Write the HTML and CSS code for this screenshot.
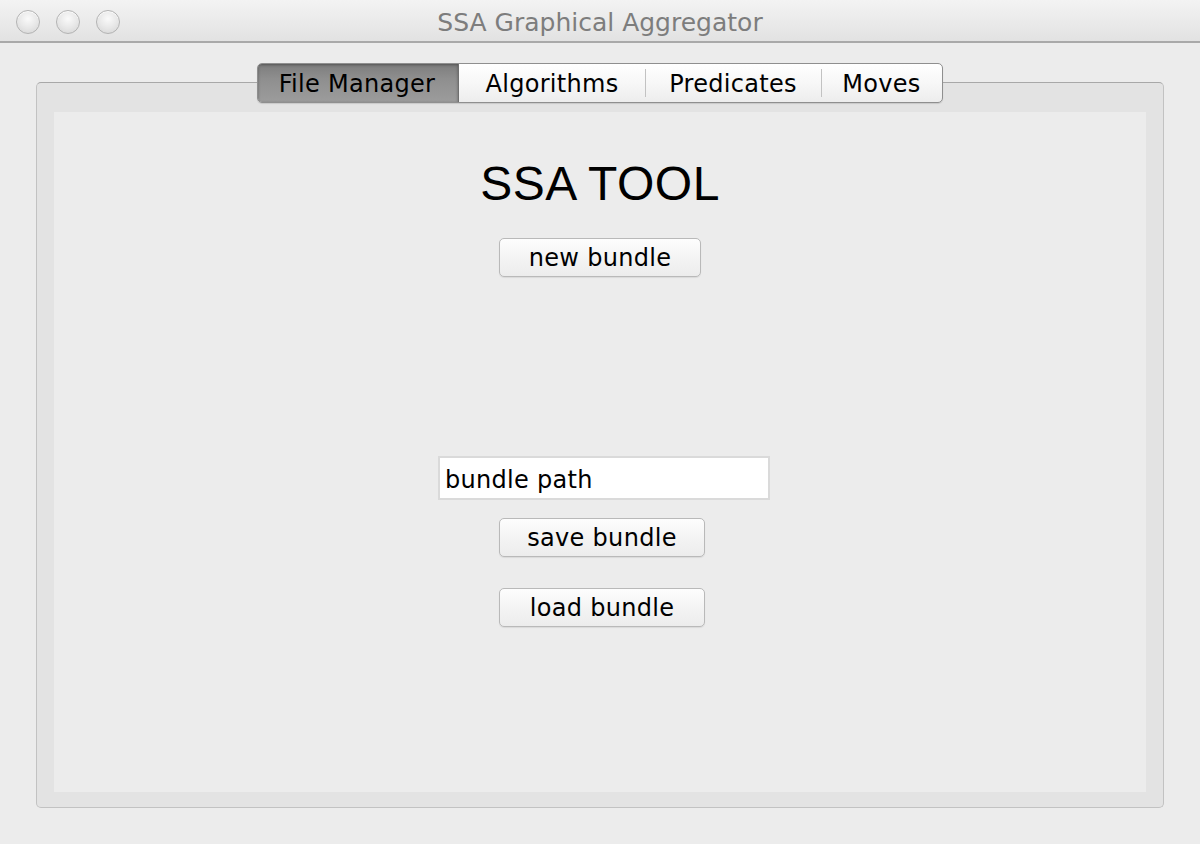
FILE: index.html
```html
<!DOCTYPE html>
<html>
<head>
<meta charset="utf-8">
<title>SSA Graphical Aggregator</title>
<link rel="stylesheet" href="styles.css">
</head>
<body>
<div class="window">
  <header class="titlebar">
    <div class="lights">
      <span class="light"></span>
      <span class="light"></span>
      <span class="light"></span>
    </div>
    <div class="title">SSA Graphical Aggregator</div>
    <div class="spacer"></div>
  </header>
  <main class="main">
    <nav class="tabs">
      <div class="tab tab-fm selected">File Manager</div>
      <div class="tab tab-alg">Algorithms</div>
      <div class="tab tab-pred">Predicates</div>
      <div class="tab tab-mov">Moves</div>
    </nav>
    <section class="panel">
      <div class="content">
        <h1 class="heading">SSA TOOL</h1>
        <button class="btn btn-new">new bundle</button>
        <input class="path" type="text" value="bundle path">
        <button class="btn btn-save">save bundle</button>
        <button class="btn btn-load">load bundle</button>
      </div>
    </section>
  </main>
</div>
</body>
</html>
```

FILE: styles.css
```css
* { box-sizing: border-box; }
html, body {
  margin: 0;
  padding: 0;
  width: 1200px;
  height: 844px;
  overflow: hidden;
  background: #ececec;
  font-family: "DejaVu Sans", "Liberation Sans", sans-serif;
}
.window {
  display: flex;
  flex-direction: column;
  height: 844px;
}
.titlebar {
  height: 43px;
  display: grid;
  grid-template-columns: 1fr auto 1fr;
  align-items: center;
  background: linear-gradient(#f3f3f3, #e9e9e9 60%, #e2e2e2);
  border-bottom: 2px solid #a9a9a9;
}
.lights {
  display: flex;
  gap: 16px;
  padding-left: 16px;
  padding-top: 2px;
}
.light {
  width: 24px;
  height: 24px;
  border-radius: 50%;
  border: 1px solid #b3b3b3;
  background: radial-gradient(circle at 50% 35%, #fafafa 0%, #e6e6e6 55%, #d2d2d2 100%);
  box-shadow: inset 0 1px 1px rgba(255,255,255,0.9);
}
.title {
  font-size: 25px;
  color: #7d7d7d;
  padding-top: 3px;
}
.main {
  display: flex;
  flex-direction: column;
  align-items: center;
  padding: 20px 36px 0 36px;
}
.tabs {
  display: flex;
  position: relative;
  z-index: 1;
  height: 40px;
  border: 1px solid #8f8f8f;
  border-radius: 5px;
  background: linear-gradient(#ffffff, #f7f7f7 50%, #ededed);
  box-shadow: 0 1px 1px rgba(0,0,0,0.12);
  overflow: hidden;
}
.tab {
  display: flex;
  align-items: center;
  justify-content: center;
  font-size: 24px;
  letter-spacing: 0.3px;
  color: #000;
  position: relative;
  padding-top: 1px;
}
.tab + .tab::before {
  content: "";
  position: absolute;
  left: 0;
  top: 5px;
  bottom: 5px;
  width: 1px;
  background: #c2c2c2;
}
.tab.selected + .tab::before { display: none; }
.tab-fm { width: 201px; padding-right: 2px; }
.tab-alg { width: 186px; }
.tab-pred { width: 176px; }
.tab-mov { width: 121px; }
.tab.selected {
  background: linear-gradient(#7d7d7d, #8f8f8f 40%, #9c9c9c);
  box-shadow: inset 0 1px 3px rgba(0,0,0,0.35);
  border-right: 1px solid #6f6f6f;
}
.panel {
  margin-top: -21px;
  width: 1128px;
  height: 726px;
  border: 1px solid #c2c2c2;
  border-top-color: #a8a8a8;
  border-radius: 5px;
  background: #e3e3e3;
  padding: 29px 17px 15px 17px;
}
.content {
  height: 680px;
  background: #ececec;
  display: flex;
  flex-direction: column;
  align-items: center;
}
.heading {
  margin: 44px 0 0 0;
  font-family: "Liberation Sans", Arial, sans-serif;
  font-weight: normal;
  font-size: 48px;
  letter-spacing: 0.5px;
  line-height: 55px;
  color: #000;
}
.btn {
  font-family: "DejaVu Sans", sans-serif;
  font-size: 24px;
  letter-spacing: 0.3px;
  color: #000;
  height: 39px;
  padding: 0;
  border: 1px solid #b9b9b9;
  border-radius: 5px;
  background: linear-gradient(#fdfdfd, #f4f4f4 50%, #ececec);
  box-shadow: 0 1px 1px rgba(0,0,0,0.08);
}
.btn-new {
  width: 202px;
  margin-top: 27px;
}
.path {
  margin-top: 179px;
  margin-left: 8px;
  width: 332px;
  height: 44px;
  border: 2px solid #dadada;
  background: #fff;
  font-family: "DejaVu Sans", sans-serif;
  font-size: 24px;
  letter-spacing: 0.3px;
  color: #000;
  padding: 4px 0 0 5px;
  outline: none;
}
.btn-save {
  width: 206px;
  margin-top: 18px;
  margin-left: 4px;
}
.btn-load {
  width: 206px;
  margin-top: 31px;
  margin-left: 4px;
}
```
